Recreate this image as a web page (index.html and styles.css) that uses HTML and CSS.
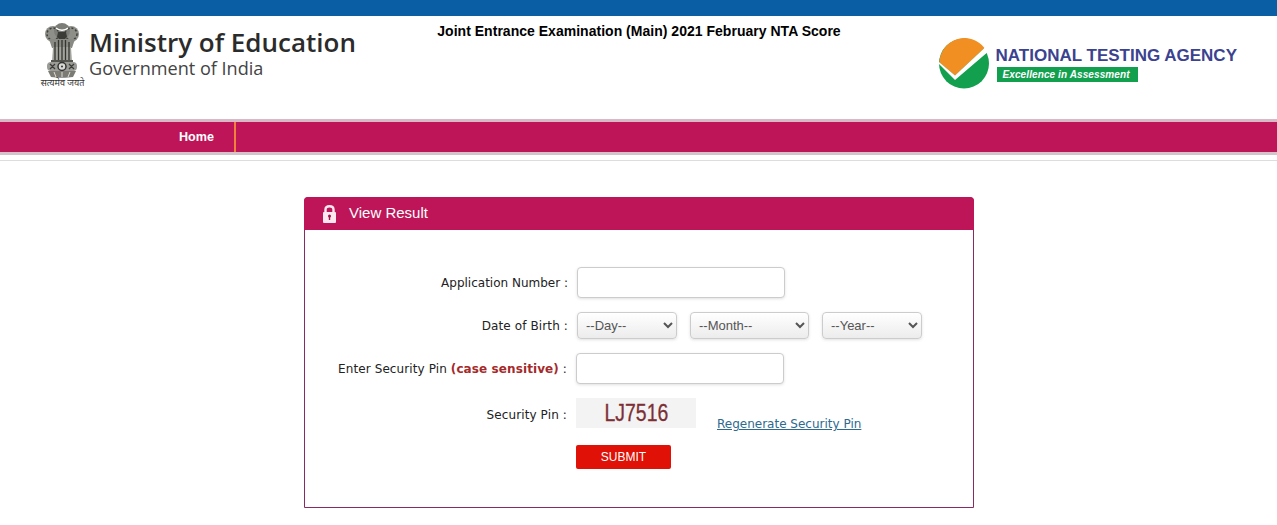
FILE: index.html
```html
<!DOCTYPE html>
<html lang="en">
<head>
    <meta charset="UTF-8">
    <meta name="viewport" content="width=device-width, initial-scale=1.0">
    <title>Joint Entrance Examination (Main) 2021 February NTA Score</title>
    <link rel="stylesheet" href="styles.css">
</head>
<body>
    <div class="top-bar"></div>

    <!-- Header -->
    <div class="header">
        <div class="ministry">
            <div class="emblem">
                <svg width="36" height="55" viewBox="0 0 36 55">
                    <!-- lions -->
                    <circle cx="9" cy="11" r="8" fill="#8f8f8a"/>
                    <circle cx="27" cy="11" r="8" fill="#8f8f8a"/>
                    <circle cx="18" cy="8" r="8" fill="#7d7d78"/>
                    <circle cx="9" cy="11" r="6" fill="none" stroke="#3f3f3c" stroke-width="1.500" stroke-dasharray="2 2"/>
                    <circle cx="27" cy="11" r="6" fill="none" stroke="#3f3f3c" stroke-width="1.500" stroke-dasharray="2 2"/>
                    <path d="M12 5c3 3 9 3 12 0" fill="none" stroke="#fff" stroke-width="1.300"/>
                    <path d="M14 9h8l1 5-3 3h-4l-3-3z" fill="#3a3a37"/>
                    <path d="M5 16h26l-3 9H8z" fill="#8a8a85"/>
                    <!-- legs -->
                    <path d="M9 24h18l1 15H8z" fill="#a3a39e"/>
                    <path d="M11 19v20M14.500 17v22M18 17v22M21.500 17v22M25 19v20" stroke="#35352f" stroke-width="1.300"/>
                    <path d="M7 38h22" stroke="#55554f" stroke-width="2"/>
                    <!-- abacus and wheel -->
                    <rect x="3" y="39" width="30" height="9" rx="4" fill="#9b9b97"/>
                    <circle cx="18" cy="43.500" r="4" fill="#d8d8d4" stroke="#333" stroke-width="1.500"/>
                    <circle cx="18" cy="43.500" r="1" fill="#333"/>
                    <path d="M6 41l5 5M6 46l5-5M25 41l5 5M25 46l5-5" stroke="#3c3c38" stroke-width="1.300"/>
                    <path d="M4 48h28l-3 6c-6 1-16 1-22 0z" fill="#7b7b74"/>
                    <path d="M10 49l2 5M18 49v5M26 49l-2 5" stroke="#dcdcd8" stroke-width="1"/>
                </svg>
                <span class="motto">सत्यमेव जयते</span>
            </div>
            <div class="ministry-text">
                <div class="ministry-name">Ministry of Education</div>
                <div class="ministry-gov">Government of India</div>
            </div>
        </div>

        <div class="exam-title">Joint Entrance Examination (Main) 2021 February NTA Score</div>

        <div class="nta-logo">
            <svg class="nta-mark" width="50" height="51" viewBox="0 0 50 51">
                <circle cx="25" cy="25.500" r="25" fill="#12a04f"/>
                <path d="M0.500 24.500L16 37.500L45.500 10A25 25 0 0 0 0.500 24.500z" fill="#f28f22"/>
                <path d="M-1 25L16 42L50 13L46 9.500L16 37.500L0 24z" fill="#fff"/>
            </svg>
            <div class="nta-text">
                <div class="nta-name">NATIONAL TESTING AGENCY</div>
                <div class="nta-tag">Excellence in Assessment</div>
            </div>
        </div>
    </div>

    <!-- Menu -->
    <div class="nav">
        <a class="nav-item" href="#">Home</a>
    </div>
    <div class="nav-rule"></div>

    <!-- Form -->
    <div class="panel">
        <div class="panel-head">
            <svg width="13" height="18" viewBox="0 0 13 18">
                <path d="M2.500 8V4.500Q2.500 1.200 6.500 1.200T10.500 4.500V8" fill="none" stroke="#fde8f0" stroke-width="2.400"/>
                <rect y="7" width="13" height="11" rx="1" fill="#fde8f0"/>
                <circle cx="6.500" cy="11" r="1.500" fill="#a5134e"/>
                <path d="M5.800 11h1.400v4H5.800z" fill="#a5134e"/>
            </svg>
            <span class="panel-title">View Result</span>
        </div>
        <div class="panel-body">
            <div class="form-row row-app">
                <label class="form-label">Application Number :</label>
                <input type="text" class="form-input">
            </div>
            <div class="form-row row-dob">
                <label class="form-label">Date of Birth :</label>
                <div class="dob-selects">
                    <select class="form-select sel-day"><option>--Day--</option></select>
                    <select class="form-select sel-month"><option>--Month--</option></select>
                    <select class="form-select sel-day"><option>--Year--</option></select>
                </div>
            </div>
            <div class="form-row row-pin">
                <label class="form-label">Enter Security Pin <b class="case-note">(case sensitive)</b> :</label>
                <input type="text" class="form-input">
            </div>
            <div class="form-row row-captcha">
                <label class="form-label">Security Pin :</label>
                <div class="captcha"><span>LJ7516</span></div>
                <a class="regen-link" href="#">Regenerate Security Pin</a>
            </div>
            <div class="form-row row-submit">
                <span></span>
                <button class="submit-btn">SUBMIT</button>
            </div>
        </div>
    </div>
</body>
</html>
```

FILE: styles.css
```css
html, body {
    margin: 0;
    padding: 0;
    background: white;
    overflow: hidden;
}

body {
    font-family: "Liberation Sans", Arial, sans-serif;
    color: #222;
}

.top-bar {
    height: 16px;
    background: #0a5ea3;
}

.header {
    display: grid;
    grid-template-columns: 1fr auto 1fr;
    height: 103px;
    padding: 0 40px;
}

.ministry {
    display: flex;
    padding-top: 7px;
}

.emblem {
    width: 45px;
    display: flex;
    flex-direction: column;
    align-items: center;
}

.emblem svg {
    margin-left: -1px;
    display: block;
}

.motto {
    font-family: "Noto Sans", "DejaVu Sans", sans-serif;
    font-size: 9px;
    line-height: 10px;
    white-space: nowrap;
    color: #333;
}

.ministry-text {
    margin-left: 4px;
    padding-top: 5px;
    font-family: "Open Sans", sans-serif;
    color: #2b2b2b;
}

.ministry-name {
    font-size: 26px;
    font-weight: 600;
    line-height: 28px;
    white-space: nowrap;
}

.ministry-gov {
    font-size: 18.100px;
    line-height: 24px;
    color: #444;
    white-space: nowrap;
}

.exam-title {
    font-size: 14px;
    font-weight: bold;
    color: black;
    margin-left: 1px;
    padding-top: 7px;
    letter-spacing: 0.02px;
    white-space: nowrap;
}

.nta-logo {
    display: flex;
    justify-content: flex-end;
    padding-top: 22px;
}

.nta-mark {
    display: block;
    margin-right: 7px;
}

.nta-name {
    font-size: 17px;
    font-weight: bold;
    line-height: 20px;
    margin-top: 8px;
    color: #3b4290;
    white-space: nowrap;
}

.nta-tag {
    width: 141px;
    height: 15px;
    margin: 1px 0 0 1px;
    box-sizing: border-box;
    padding-left: 6px;
    background: #12a04f;
    color: white;
    font-size: 10px;
    font-weight: bold;
    font-style: italic;
    line-height: 15px;
    letter-spacing: 0.1px;
    white-space: nowrap;
}

.nav {
    height: 30px;
    padding-left: 159px;
    background: #bd1558;
    border-top: 3px solid #d9b9c6;
    border-bottom: 3px solid #d5c3cc;
    display: flex;
}

.nav-item {
    padding: 1px 20px 0;
    line-height: 29px;
    font-size: 12.600px;
    font-weight: bold;
    color: white;
    text-decoration: none;
    border-right: 2px solid #f0803c;
}

.nav-rule {
    height: 1px;
    margin-top: 5px;
    background: #ddd;
}

.panel {
    width: 670px;
    height: 311px;
    margin: 36px 0 0 304px;
    box-sizing: border-box;
    border: 1px solid #8a2a62;
    border-radius: 4px 4px 0 0;
}

.panel-head {
    height: 33px;
    margin: -1px -1px 0;
    padding-left: 19px;
    background: #bd1558;
    border-radius: 4px 4px 0 0;
    display: flex;
    align-items: center;
    gap: 13px;
    color: white;
    font-size: 15px;
}

.panel-title {
    padding-bottom: 2px;
}

.panel-body {
    padding-top: 37px;
}

.form-row {
    display: grid;
    grid-template-columns: 263px auto;
    justify-content: start;
    align-items: center;
    column-gap: 9px;
}

.form-label {
    font-family: "DejaVu Sans", Verdana, sans-serif;
    font-size: 12px;
    text-align: right;
    color: #222;
    white-space: nowrap;
}

.row-dob .form-label,
.row-captcha .form-label {
    letter-spacing: 0.12px;
}

.row-pin .form-label {
    letter-spacing: 0.1px;
}

.case-note {
    color: #a52a2a;
}

.form-input {
    width: 208px;
    height: 31px;
    box-sizing: border-box;
    border: 1px solid #ccc;
    border-radius: 4px;
    background: white;
    box-shadow: 0 1px 3px rgba(0,0,0,0.12);
}

.row-dob {
    margin-top: 14px;
}

.dob-selects {
    display: flex;
    gap: 13px;
}

.form-select {
    height: 27px;
    box-sizing: border-box;
    padding: 0 4px 1px;
    border: 1px solid #ccc;
    border-radius: 4px;
    background: linear-gradient(#fff, #ececec);
    box-shadow: 0 1px 3px rgba(0,0,0,0.12);
    font-family: "Liberation Sans", Arial, sans-serif;
    font-size: 13px;
    color: #555;
}

.sel-day {
    width: 100px;
}

.sel-month {
    width: 119px;
}

.row-pin {
    grid-template-columns: 262px auto;
    margin-top: 14px;
}

.row-captcha {
    grid-template-columns: 262px 120px auto;
    align-items: start;
    margin-top: 14px;
}

.row-captcha .form-label {
    margin-top: 10px;
}

.captcha {
    width: 120px;
    height: 30px;
    background: #f3f3f3;
    text-align: center;
}

.captcha span {
    display: inline-block;
    font-size: 24px;
    line-height: 29px;
    color: #7d2f35;
    -webkit-text-stroke: 0.3px #7d2f35;
    transform: scaleX(0.81);
}

.regen-link {
    margin: 19px 0 0 12px;
    font-family: "DejaVu Sans", Verdana, sans-serif;
    font-size: 12px;
    color: #2c6a90;
    white-space: nowrap;
}

.row-submit {
    grid-template-columns: 262px auto;
    margin-top: 14px;
}

.submit-btn {
    width: 95px;
    height: 24px;
    padding: 0;
    border: 0;
    border-radius: 2px;
    background: #e01106;
    color: white;
    font-family: "Liberation Sans", Arial, sans-serif;
    font-size: 12px;
}
```
